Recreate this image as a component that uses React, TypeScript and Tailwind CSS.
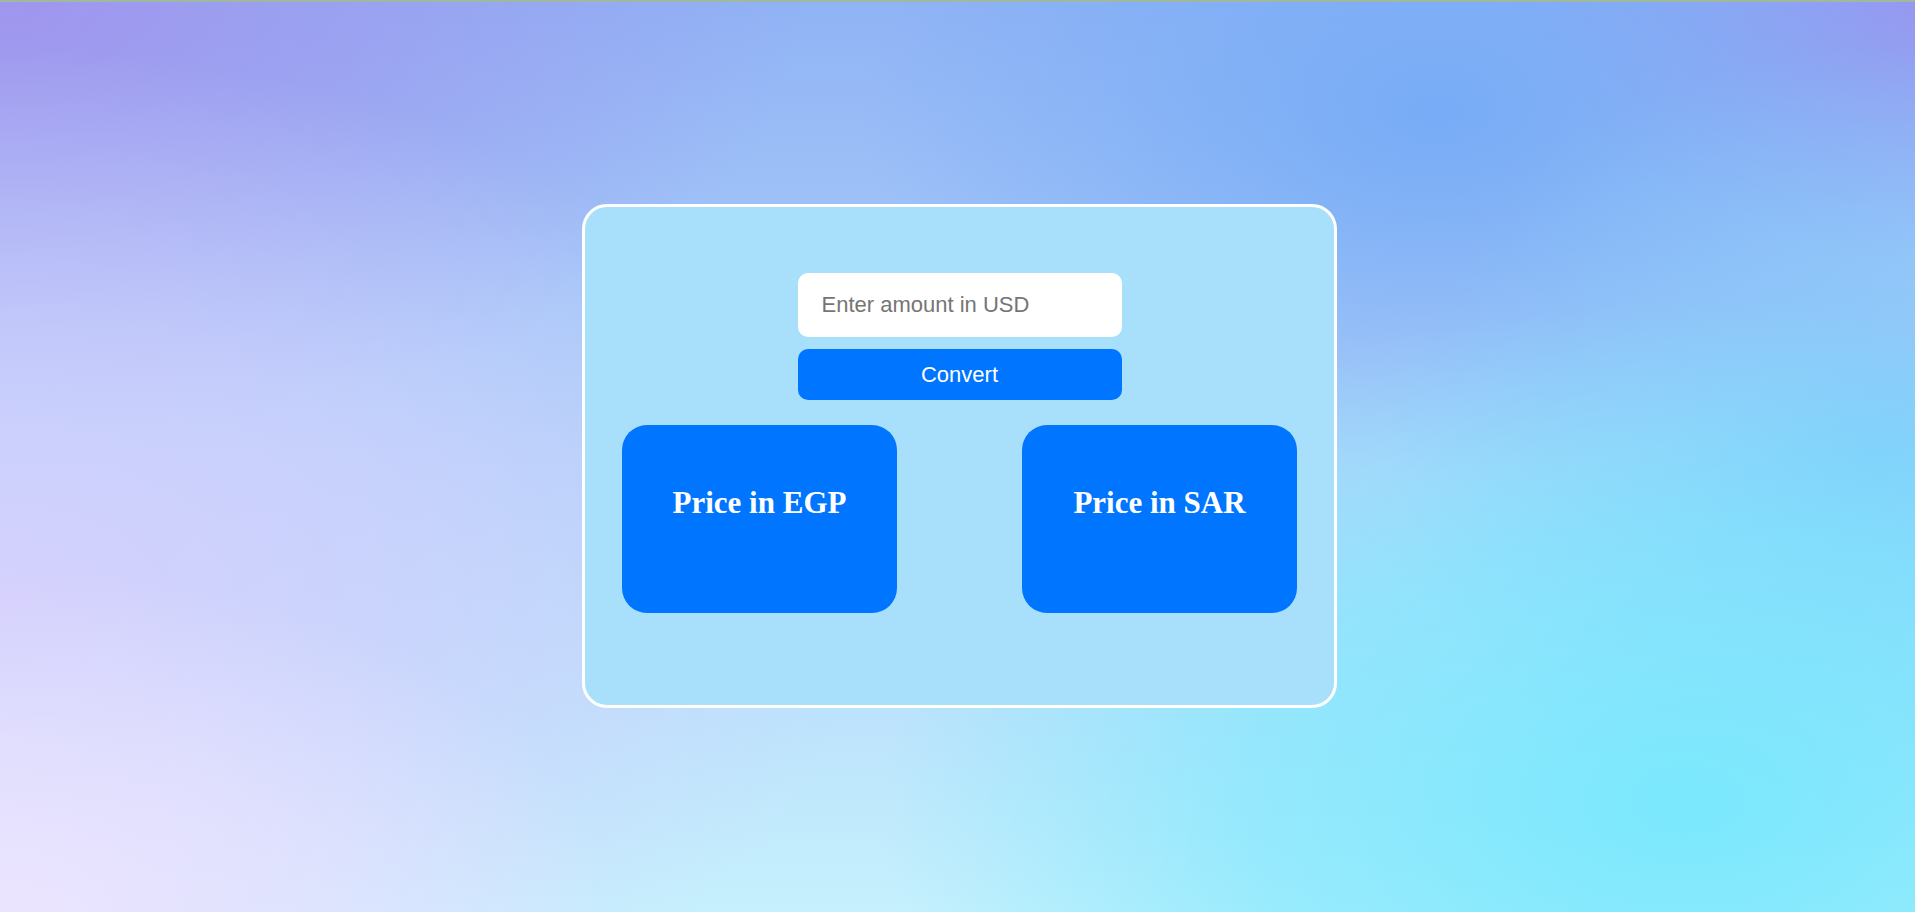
export default function App() {
  return (
    <div className="min-h-screen w-full border-t-2 border-[#9fb8a2] flex items-center justify-center pb-[2px] bg-[radial-gradient(ellipse_32%_38%_at_0%_100%,#ece4ff_0%,rgba(236,228,255,0.6)_50%,rgba(236,228,255,0)_100%),radial-gradient(ellipse_42%_55%_at_88%_88%,#7ae8fd_0%,rgba(122,232,253,0.6)_55%,rgba(122,232,253,0)_100%),radial-gradient(ellipse_45%_60%_at_0%_65%,#d4d0fd_0%,rgba(212,208,253,0.6)_50%,rgba(212,208,253,0)_100%),radial-gradient(ellipse_25%_45%_at_98%_50%,#84c8fa_0%,rgba(132,200,250,0)_100%),radial-gradient(ellipse_30%_40%_at_75%_12%,#77acf6_0%,rgba(119,172,246,0.5)_50%,rgba(119,172,246,0)_100%),radial-gradient(ellipse_42%_48%_at_0%_0%,#a096ee_0%,rgba(160,150,238,0.55)_50%,rgba(160,150,238,0)_100%),radial-gradient(ellipse_22%_28%_at_100%_0%,#9a96ef_0%,rgba(154,150,239,0)_100%),linear-gradient(to_bottom,#90b3f5_0%,#b0d2fa_50%,#c6f0fd_100%)]">
      <div className="ml-1 w-[755px] h-[504px] border-[3px] border-white rounded-[25px] bg-[#a8e0fb] flex flex-col items-center pt-[66px]">
        <input
          placeholder="Enter amount in USD"
          className="w-[324px] h-[64px] rounded-[10px] bg-white pl-6 text-[22px] text-black outline-none placeholder:text-[#757575] font-['Liberation_Sans',Arial,sans-serif]"
        />
        <button className="mt-3 w-[324px] h-[51px] rounded-[10px] bg-[#0075ff] text-white text-[22px] font-['Liberation_Sans',Arial,sans-serif]">
          Convert
        </button>
        <div className="mt-[25px] w-full flex justify-between px-[37px]">
          <div className="w-[275px] h-[188px] rounded-[25px] bg-[#0075ff] pt-[60px] text-center">
            <h2 className="text-[31px] leading-[36px] font-bold text-white font-['Liberation_Serif','Times_New_Roman',serif]">
              Price in EGP
            </h2>
          </div>
          <div className="w-[275px] h-[188px] rounded-[25px] bg-[#0075ff] pt-[60px] text-center">
            <h2 className="text-[31px] leading-[36px] font-bold text-white font-['Liberation_Serif','Times_New_Roman',serif]">
              Price in SAR
            </h2>
          </div>
        </div>
      </div>
    </div>
  );
}
